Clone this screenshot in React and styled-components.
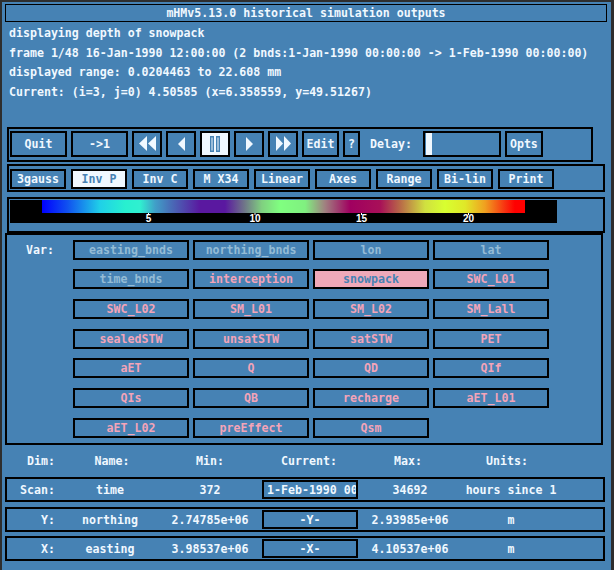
import React from 'react';
import styled, { createGlobalStyle } from 'styled-components';

const BG = '#4682b4';
const FG = '#f0f8ff';
const PINK = '#f4a4b8';
const DIM = '#94bcd6';

const GlobalStyle = createGlobalStyle`
  html, body { margin: 0; padding: 0; background: #2e2e2e; }
  body { width: 614px; height: 570px; overflow: hidden; }
`;

const Window = styled.div`
  box-sizing: border-box;
  width: 614px;
  height: 570px;
  background: ${BG};
  border-top: 2px solid #2e2e2e;
  border-left: 2px solid #2e2e2e;
  border-right: 3px solid #2e2e2e;
  display: flex;
  flex-direction: column;
  font-family: "DejaVu Sans Mono", monospace;
  font-weight: bold;
  font-size: 11.6px;
  color: ${FG};
`;

const Title = styled.div`
  box-sizing: border-box;
  margin: 2px 0 0 3px;
  width: 602px;
  height: 18px;
  border: 1px solid #000;
  display: flex;
  align-items: center;
  justify-content: center;
  white-space: pre;
`;

const Info = styled.div`
  margin-top: 2px;
  padding-left: 7px;
  display: flex;
  flex-direction: column;
`;

const InfoLine = styled.div`
  height: 19.67px;
  line-height: 19.67px;
  white-space: pre;
`;

const Frame = styled.div`
  box-sizing: border-box;
  margin-top: ${p => p.$mt}px;
  margin-left: ${p => p.$ml}px;
  width: ${p => p.$w}px;
  height: ${p => p.$h}px;
  border: 2px solid #000;
`;

const ButtonRow = styled.div`
  display: flex;
  align-items: center;
  gap: ${p => p.$gap}px;
  padding: ${p => p.$pt}px 0 0 1px;
`;

const Btn = styled.div`
  box-sizing: border-box;
  flex: none;
  width: ${p => p.$w}px;
  height: ${p => p.$h}px;
  border: 2px solid #000;
  background: ${p => (p.$on ? FG : 'transparent')};
  color: ${p => (p.$on ? BG : FG)};
  display: flex;
  align-items: center;
  justify-content: center;
  white-space: pre;
`;

const Label = styled.div`
  flex: none;
  margin: 0 ${p => p.$mr}px 0 ${p => p.$ml}px;
  white-space: pre;
`;

const Slider = styled.div`
  box-sizing: border-box;
  flex: none;
  width: 78px;
  height: 26px;
  border: 2px solid #000;
  padding: 0 0 0 1px;
  display: flex;
  align-items: center;
`;

const Thumb = styled.div`
  width: 6px;
  height: 22px;
  background: ${FG};
`;

const ScaleWrap = styled.div`
  padding: 1px 0 0 1px;
`;

const VarFrame = styled(Frame)`
  display: grid;
  grid-template-columns: 62px repeat(4, 116px);
  column-gap: 4px;
  row-gap: 9.67px;
  grid-auto-rows: 20px;
  padding-top: 5px;
  align-content: start;
`;

const VarLabel = styled.div`
  grid-column: 1;
  grid-row: 1;
  display: flex;
  align-items: center;
  justify-content: center;
  padding-left: 4px;
`;

const VarBtn = styled.div`
  box-sizing: border-box;
  border: 2px solid #000;
  background: ${p => (p.$on ? '#efa9b9' : 'transparent')};
  color: ${p => (p.$on ? BG : p.$dim ? DIM : PINK)};
  display: flex;
  align-items: center;
  justify-content: center;
  white-space: pre;
`;

const HeadRow = styled.div`
  margin: 6px 0 0 5px;
  height: 20px;
  display: grid;
  grid-template-columns: 68px 74px 122px 76px 122px 76px;
  align-items: center;
  justify-items: center;
`;

const DimRow = styled.div`
  box-sizing: border-box;
  margin: ${p => p.$mt}px 0 0 3px;
  width: 600px;
  height: 25px;
  border: 2px solid #000;
  padding-top: 1px;
  display: grid;
  grid-template-columns: 55px 96px 104px 96px 104px 98px;
  align-items: center;
`;

const Cell = styled.div`
  text-align: ${p => p.$align || 'center'};
  padding-right: ${p => (p.$align === 'right' ? 7 : 0)}px;
  white-space: pre;
`;

const CurBox = styled.div`
  box-sizing: border-box;
  height: 19px;
  margin-top: -1px;
  border: 2px solid #000;
  overflow: hidden;
  white-space: pre;
  padding-left: ${p => (p.$left ? 3 : 0)}px;
  text-align: ${p => (p.$left ? 'left' : 'center')};
  line-height: 16px;
`;

const Icon = ({ kind }) => {
  const fill = FG;
  if (kind === 'll')
    return (
      <svg width="17" height="15" viewBox="0 0 17 15">
        <polygon points="8,0 0,7.5 8,15" fill={fill} />
        <polygon points="17,0 9,7.5 17,15" fill={fill} />
      </svg>
    );
  if (kind === 'l')
    return (
      <svg width="7" height="14" viewBox="0 0 7 14">
        <polygon points="7,0 0,7 7,14" fill={fill} />
      </svg>
    );
  if (kind === 'r')
    return (
      <svg width="7" height="14" viewBox="0 0 7 14">
        <polygon points="0,0 7,7 0,14" fill={fill} />
      </svg>
    );
  if (kind === 'rr')
    return (
      <svg width="15" height="15" viewBox="0 0 15 15">
        <polygon points="0,0 7,7.5 0,15" fill={fill} />
        <polygon points="8,0 15,7.5 8,15" fill={fill} />
      </svg>
    );
  return (
    <svg width="10" height="16" viewBox="0 0 10 16">
      <rect x="0.75" y="0.75" width="2.5" height="14.5" fill={FG} stroke={BG} strokeWidth="1.5" />
      <rect x="6.75" y="0.75" width="2.5" height="14.5" fill={FG} stroke={BG} strokeWidth="1.5" />
    </svg>
  );
};

const stops = [
  [0, '#0000ff'], [0.052, '#1050f0'], [0.12, '#20d0e8'], [0.172, '#28f0d0'],
  [0.203, '#30f0d0'], [0.234, '#40a0c8'], [0.265, '#4870b8'], [0.327, '#5a18a0'],
  [0.379, '#5a18a0'], [0.42, '#707888'], [0.455, '#80d080'], [0.493, '#80ff80'],
  [0.545, '#80f080'], [0.586, '#a08080'], [0.638, '#a00060'], [0.7, '#a81058'],
  [0.741, '#b86848'], [0.793, '#d0e040'], [0.834, '#d8ff30'], [0.876, '#e0e828'],
  [0.917, '#f0a020'], [0.959, '#f83010'], [0.979, '#ff0000'], [1, '#ff0000'],
];

const ColorScale = () => (
  <svg width="547" height="23" viewBox="0 0 547 23" style={{ display: 'block' }}>
    <defs>
      <linearGradient id="cmap" x1="0" x2="1" y1="0" y2="0">
        {stops.map(([o, c]) => (
          <stop key={o} offset={o} stopColor={c} />
        ))}
      </linearGradient>
    </defs>
    <rect x="0" y="0" width="547" height="23" fill="#000" />
    <rect x="32" y="0" width="483" height="13" fill="url(#cmap)" />
    {[['5', 138.5], ['10', 245], ['15', 351.5], ['20', 458.5]].map(([t, x]) => (
      <g key={t}>
        <line x1={x} x2={x} y1="13" y2="15" stroke="#fff" strokeWidth="1" />
        <text x={x} y="22" fill="#fff" fontSize="10" fontFamily="Liberation Sans, sans-serif" textAnchor="middle">
          {t}
        </text>
      </g>
    ))}
  </svg>
);

const vars = [
  ['easting_bnds', 'd'], ['northing_bnds', 'd'], ['lon', 'd'], ['lat', 'd'],
  ['time_bnds', 'd'], ['interception'], ['snowpack', 'on'], ['SWC_L01'],
  ['SWC_L02'], ['SM_L01'], ['SM_L02'], ['SM_Lall'],
  ['sealedSTW'], ['unsatSTW'], ['satSTW'], ['PET'],
  ['aET'], ['Q'], ['QD'], ['QIf'],
  ['QIs'], ['QB'], ['recharge'], ['aET_L01'],
  ['aET_L02'], ['preEffect'], ['Qsm'],
];

export default function App() {
  return (
    <>
      <GlobalStyle />
      <Window>
        <Title>mHMv5.13.0 historical simulation outputs</Title>
        <Info>
          <InfoLine>displaying depth of snowpack</InfoLine>
          <InfoLine>frame 1/48 16-Jan-1990 12:00:00 (2 bnds:1-Jan-1990 00:00:00 -&gt; 1-Feb-1990 00:00:00)</InfoLine>
          <InfoLine>displayed range: 0.0204463 to 22.608 mm</InfoLine>
          <InfoLine>Current: (i=3, j=0) 4.50585 (x=6.358559, y=49.51267)</InfoLine>
        </Info>

        <Frame $mt={24} $ml={5} $w={586} $h={35}>
          <ButtonRow $gap={4} $pt={2}>
            <Btn $w={57} $h={26}>Quit</Btn>
            <Btn $w={57} $h={26}>-&gt;1</Btn>
            <Btn $w={30} $h={26}><Icon kind="ll" /></Btn>
            <Btn $w={30} $h={26}><Icon kind="l" /></Btn>
            <Btn $w={30} $h={26} $on><Icon kind="p" /></Btn>
            <Btn $w={30} $h={26}><Icon kind="r" /></Btn>
            <Btn $w={30} $h={26}><Icon kind="rr" /></Btn>
            <Btn $w={37} $h={26}>Edit</Btn>
            <Btn $w={17} $h={26}>?</Btn>
            <Label $ml={6} $mr={7}>Delay:</Label>
            <Slider><Thumb /></Slider>
            <Btn $w={38} $h={26}>Opts</Btn>
          </ButtonRow>
        </Frame>

        <Frame $mt={2} $ml={5} $w={598} $h={28}>
          <ButtonRow $gap={5} $pt={3}>
            <Btn $w={56} $h={20}>3gauss</Btn>
            <Btn $w={56} $h={20} $on>Inv P</Btn>
            <Btn $w={56} $h={20}>Inv C</Btn>
            <Btn $w={56} $h={20}>M X34</Btn>
            <Btn $w={56} $h={20}>Linear</Btn>
            <Btn $w={56} $h={20}>Axes</Btn>
            <Btn $w={56} $h={20}>Range</Btn>
            <Btn $w={56} $h={20}>Bi-lin</Btn>
            <Btn $w={56} $h={20}>Print</Btn>
          </ButtonRow>
        </Frame>

        <Frame $mt={5} $ml={5} $w={598} $h={36}>
          <ScaleWrap><ColorScale /></ScaleWrap>
        </Frame>

        <VarFrame $mt={0} $ml={3} $w={598} $h={212}>
          <VarLabel>Var:</VarLabel>
          {vars.map(([name, st], i) => (
            <VarBtn
              key={name}
              $dim={st === 'd'}
              $on={st === 'on'}
              style={{ gridColumn: (i % 4) + 2, gridRow: Math.floor(i / 4) + 1 }}
            >
              {name}
            </VarBtn>
          ))}
        </VarFrame>

        <HeadRow>
          <Cell>Dim:</Cell>
          <Cell>Name:</Cell>
          <Cell>Min:</Cell>
          <Cell>Current:</Cell>
          <Cell>Max:</Cell>
          <Cell>Units:</Cell>
        </HeadRow>

        <DimRow $mt={6}>
          <Cell $align="right">Scan:</Cell>
          <Cell>time</Cell>
          <Cell>372</Cell>
          <CurBox $left>1-Feb-1990 00</CurBox>
          <Cell>34692</Cell>
          <Cell>hours since 1</Cell>
        </DimRow>
        <DimRow $mt={5}>
          <Cell $align="right">Y:</Cell>
          <Cell>northing</Cell>
          <Cell>2.74785e+06</Cell>
          <CurBox>-Y-</CurBox>
          <Cell>2.93985e+06</Cell>
          <Cell>m</Cell>
        </DimRow>
        <DimRow $mt={4}>
          <Cell $align="right">X:</Cell>
          <Cell>easting</Cell>
          <Cell>3.98537e+06</Cell>
          <CurBox>-X-</CurBox>
          <Cell>4.10537e+06</Cell>
          <Cell>m</Cell>
        </DimRow>
      </Window>
    </>
  );
}
